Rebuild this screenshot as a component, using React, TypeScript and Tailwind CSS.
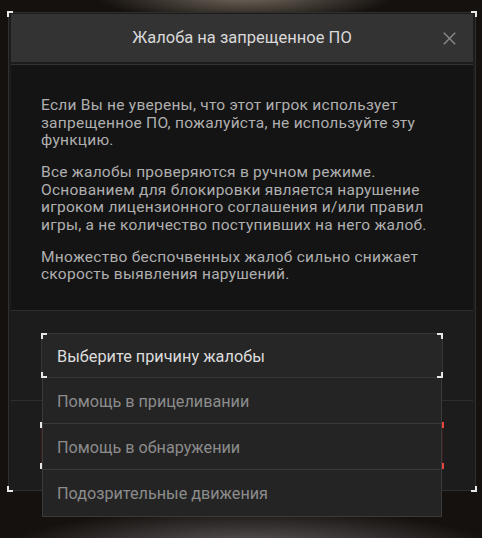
import React from "react";

function Corners({ left, right, len = "w-[6px] h-[6px]" }: { left: string; right: string; len?: string }) {
  return (
    <>
      <span className={`pointer-events-none absolute -left-px -top-px ${len} border-l-2 border-t-2 ${left}`} />
      <span className={`pointer-events-none absolute -right-px -top-px ${len} border-r-2 border-t-2 ${right}`} />
      <span className={`pointer-events-none absolute -left-px -bottom-px ${len} border-l-2 border-b-2 ${left}`} />
      <span className={`pointer-events-none absolute -right-px -bottom-px ${len} border-r-2 border-b-2 ${right}`} />
    </>
  );
}

const options = ["Помощь в прицеливании", "Помощь в обнаружении", "Подозрительные движения"];

export default function App() {
  return (
    <div className="relative w-[482px] h-[538px] overflow-hidden bg-[#15110e] bg-[radial-gradient(ellipse_150px_26px_at_245px_-4px,rgba(125,116,104,0.9),rgba(21,17,14,0)),radial-gradient(ellipse_250px_44px_at_250px_552px,rgba(105,99,102,0.95),rgba(21,17,14,0))] pt-[12px] pl-[8px] font-['Roboto',sans-serif]">
      <div className="relative flex h-[479px] w-[468px] flex-col border border-[#2f2f2f] bg-[#1c1c1c] px-[2px] py-px">
        <span className="pointer-events-none absolute -left-[2px] -top-[2px] h-[6px] w-[6px] border-l-2 border-t-2 border-[#e8e8e8]" />
        <span className="pointer-events-none absolute -right-[2px] -top-[2px] h-[6px] w-[6px] border-r-2 border-t-2 border-[#e8e8e8]" />
        <span className="pointer-events-none absolute -left-[2px] -bottom-[2px] h-[6px] w-[6px] border-l-2 border-b-2 border-[#e8e8e8]" />
        <span className="pointer-events-none absolute -right-[2px] -bottom-[2px] h-[6px] w-[6px] border-r-2 border-b-2 border-[#e8e8e8]" />

        {/* header */}
        <div className="grid h-[48px] shrink-0 grid-cols-[1fr_auto_1fr] items-center bg-[#333333]">
          <div />
          <div className="text-[16.5px] leading-none text-[#d9d9d9]">Жалоба на запрещенное ПО</div>
          <div className="flex justify-end pr-[17px]">
            <svg width="13" height="13" viewBox="0 0 13 13" fill="none">
              <path d="M0.8 0.8 L12.2 12.2 M12.2 0.8 L0.8 12.2" stroke="#8a8a8a" strokeWidth="1.4" />
            </svg>
          </div>
        </div>
        <div className="h-[2px] shrink-0 bg-[#1c1c1c]" />
        <div className="h-px shrink-0 bg-[#333333]" />

        {/* body */}
        <div className="h-[245px] shrink-0 bg-[#141414] px-[30px] pt-[32px] text-[15.5px] leading-[17.5px] tracking-[0.25px] text-[#afafaf]">
          <p>Если Вы не уверены, что этот игрок использует запрещенное ПО, пожалуйста, не используйте эту функцию.</p>
          <p className="mt-[14.5px]">
            Все жалобы проверяются в ручном режиме. Основанием для блокировки является нарушение игроком лицензионного
            соглашения и/или правил игры, а не количество поступивших на него жалоб.
          </p>
          <p className="mt-[14.5px]">Множество беспочвенных жалоб сильно снижает скорость выявления нарушений.</p>
        </div>
        <div className="h-px shrink-0 bg-[#2e2e2e]" />

        {/* select section */}
        <div className="relative z-10 h-[89px] shrink-0 px-[30px] pt-[22px]">
          <div className="relative">
            <div className="relative flex h-[45px] items-center border border-[#363636] bg-[#262626] px-[15px] pt-[3px] text-[16.3px] text-[#dcdcdc]">
              Выберите причину жалобы
              <Corners left="border-[#e6e6e6]" right="border-[#e6e6e6]" />
            </div>
            <div className="absolute left-px right-px top-full flex flex-col divide-y divide-[#3a3a3a] border border-t-0 border-[#3a3a3a] bg-[#242424]">
              {options.map((o) => (
                <div key={o} className="flex h-[46px] items-center px-[14px] pt-[3px] text-[16.2px] text-[#8c8c8c]">
                  {o}
                </div>
              ))}
            </div>
          </div>
        </div>
        <div className="h-px shrink-0 bg-[#2e2e2e]" />

        {/* button section */}
        <div className="h-[88px] shrink-0 px-[30px] pt-[22px]">
          <button aria-label="Отправить жалобу" className="relative block h-[45px] w-full bg-[#3a1d1d]">
            <Corners left="border-[#e6e6e6]" right="border-[#e8453c]" />
          </button>
        </div>
      </div>
    </div>
  );
}
